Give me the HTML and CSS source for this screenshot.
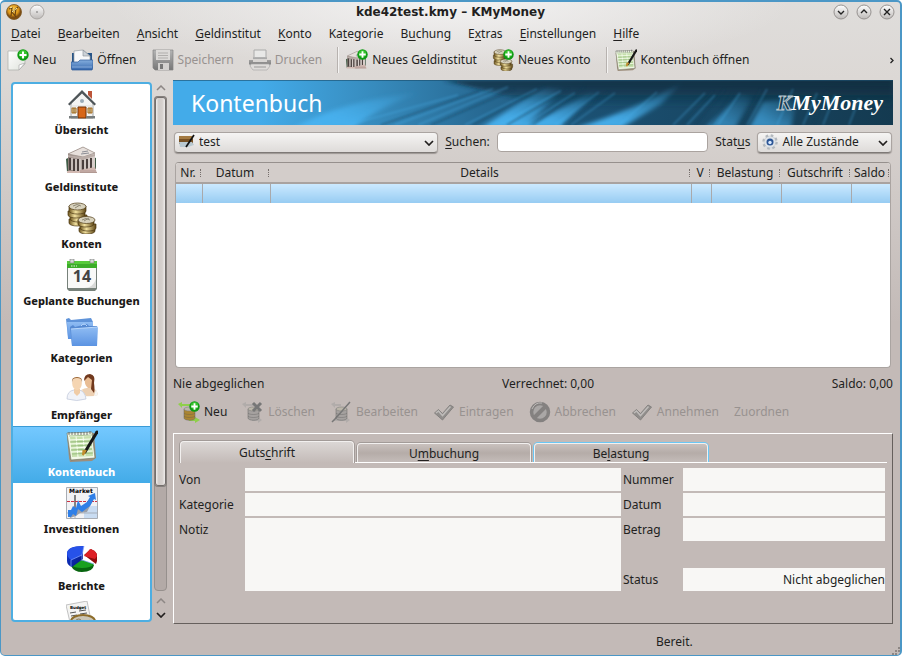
FILE: index.html
```html
<!DOCTYPE html>
<html lang="de">
<head>
<meta charset="utf-8">
<title>kde42test.kmy – KMyMoney</title>
<link rel="stylesheet" href="styles.css">
</head>
<body>
<svg class="sprite" aria-hidden="true">
  <defs>
    <linearGradient id="gold" x1="0" x2="1"><stop offset="0" stop-color="#6b531c"/><stop offset=".4" stop-color="#f3e2a0"/><stop offset="1" stop-color="#5c4414"/></linearGradient>
    <linearGradient id="paper" x1="0" y1="0" x2="1" y2="1"><stop offset="0" stop-color="#fff"/><stop offset="1" stop-color="#dfe3dc"/></linearGradient>
    <linearGradient id="folder" x1="0" y1="0" x2="0" y2="1"><stop offset="0" stop-color="#8fbcf3"/><stop offset="1" stop-color="#5b93e2"/></linearGradient>
    <linearGradient id="tray" x1="0" y1="0" x2="0" y2="1"><stop offset="0" stop-color="#84aede"/><stop offset="1" stop-color="#3567ac"/></linearGradient>
    <linearGradient id="steel" x1="0" y1="0" x2="0" y2="1"><stop offset="0" stop-color="#b5b5b5"/><stop offset="1" stop-color="#777"/></linearGradient>
    <linearGradient id="roundbtn" x1="0" y1="0" x2="0" y2="1"><stop offset="0" stop-color="#fff"/><stop offset="1" stop-color="#bdbab8"/></linearGradient>
    <radialGradient id="orb" cx=".45" cy=".35"><stop offset="0" stop-color="#ffd860"/><stop offset=".7" stop-color="#dc9518"/><stop offset="1" stop-color="#7d4d12"/></radialGradient>
    <linearGradient id="stone" x1="0" x2="1"><stop offset="0" stop-color="#897b74"/><stop offset="1" stop-color="#d9d0cc"/></linearGradient>
    <linearGradient id="bluepie" x1="0" y1="0" x2="1" y2="1"><stop offset="0" stop-color="#123bd8"/><stop offset="1" stop-color="#04167d"/></linearGradient>
  </defs>
  <symbol id="plus" viewBox="0 0 12 12"><circle cx="6" cy="6" r="5.700" fill="#0f9a14"/><circle cx="6" cy="5" r="4" fill="#35c22c"/><path d="M6 2.500v7M2.500 6h7" stroke="#fff" stroke-width="2"/></symbol>
  <symbol id="coins" viewBox="0 0 32 32">
    <g stroke="#4d3a14" stroke-width=".7">
      <g fill="url(#gold)">
        <path d="M3 17v4c0 4 17 4 17 0v-4z"/><path d="M4 13v4c0 4 17 4 17 0v-4z"/><path d="M2 9v4c0 4 17 4 17 0V9z"/><path d="M3 4v5c0 4 17 4 17 0V4z"/>
      </g>
      <ellipse cx="11.500" cy="4.500" rx="8.500" ry="3.500" fill="#d8d2bd"/>
      <g fill="url(#gold)">
        <path d="M13 26v3c0 4 16 4 16 0v-3z"/><path d="M14 22v4c0 4 16 4 16 0v-4z"/><path d="M12 18v4c0 4 16 4 16 0v-4z"/>
      </g>
      <ellipse cx="20.500" cy="18" rx="8.500" ry="3.500" fill="#d8d2bd"/>
    </g>
    <path d="M7 4q4-3 8 0M9 6l5-3M16 18q4-3 8 0M18 19l5-3" stroke="#8e8875" fill="none"/>
  </symbol>
  <symbol id="bank" viewBox="0 0 32 32">
    <path d="M0 14l4-2v15H1zM27 12l3 1v11h-3z" fill="#3f5b46"/>
    <path d="M2 9l15-7 12 6v17l-12 3-15-2z" fill="url(#stone)"/>
    <path d="M2 9L17 2l12 6-12 4z" fill="#e7e0dc" stroke="#9f938d" stroke-width=".8"/>
    <path d="M2 10l13 2v2L2 12zM15 12l14-3v2l-14 4z" fill="#b9aca7"/>
    <path d="M4 13v12M8 14v12M12 14v12M17 15v12M21 14v11M25 13v11" stroke="#4a403e" stroke-width="2"/>
    <path d="M6 13v12M10 14v12M14 14v12M19 14v12M23 13v12M27 12v12" stroke="#d9d0cc" stroke-width="1.500"/>
    <path d="M14 25l15-3 2 6H14zM1 26h14v2H1z" fill="#d2b9b2"/><path d="M14 26h16M14 27.500h17" stroke="#a38b85" stroke-width=".7"/>
    <path d="M16 7l6-1M15 9l8-1" stroke="#8b8d95"/>
  </symbol>
  <symbol id="ledger" viewBox="0 0 32 32">
    <path d="M3 28l-2-22 2-2 25-1 2 25-4 3-22 1z" fill="#9d8e7c"/>
    <path d="M1 3l25-1 3 26-24 2z" fill="#f3f8e8" stroke="#68705d" stroke-width=".6"/>
    <path d="M4 7l21-1 2 20-21 1z" fill="#c6e0ac"/>
    <path d="M4 10l21-1M4 14l22-1M5 18l21-1M5 22l21-1M10 6l2 21M17 6l2 20" stroke="#f9fff2"/>
    <path d="M3 6l23-1M4 12l22-1M5 16l21-1M5 20l21-1M6 24l21-1" stroke="#7ba661" stroke-width=".6"/>
    <path d="M31 2L19 22" stroke="#171717" stroke-width="3" stroke-linecap="round"/><path d="M20 20l-3 5 .5-5" fill="#c18d2e" stroke="#c18d2e" stroke-width="2"/>
    <path d="M3 2v3M6 2v3M9 2v3M12 2v3M15 2v3M18 2v3M21 2v3M24 1v3" stroke="#555" stroke-width=".8"/>
  </symbol>
  <symbol id="check" viewBox="0 0 22 22"><path d="M1.500 12l4-3.500 4 4L17 4l3.500 2L9.500 19z" fill="#918e8c" stroke="#858280"/><path d="M3 12l2.500-2 4 4.500 8-9" stroke="#bfbcba" stroke-width="1.500" fill="none"/></symbol>
  <symbol id="txn" viewBox="0 0 22 22"><path d="M6 8v9c0 3 11 3 11 0V8z" fill="currentColor" stroke="#666" stroke-width=".5"/><ellipse cx="11.500" cy="8" rx="5.500" ry="2" fill="#bbb6a9" stroke="#777" stroke-width=".5"/><path d="M6 12c1 2 10 2 11 0M6 15c1 2 10 2 11 0" fill="none" stroke="#5555"/></symbol>
  <symbol id="down" viewBox="0 0 10 6"><path d="M1 1l4 4 4-4" fill="none" stroke="currentColor" stroke-width="1.700"/></symbol>
  <symbol id="up" viewBox="0 0 10 6"><path d="M1 5l4-4 4 4" fill="none" stroke="currentColor" stroke-width="1.500"/></symbol>
</svg>

<div class="window">
  <header class="titlebar">
    <div class="title-buttons">
      <svg width="16" height="16" viewBox="0 0 16 16"><circle cx="8" cy="8" r="7.500" fill="url(#orb)" stroke="#7b5520" stroke-width=".8"/><path d="M3 5l3-1-1 8M12 3L6 8l4 5M10 4l-1 8" stroke="#6a4310" stroke-width="1.200" fill="none"/><path d="M4 4l2-1M6 8l5-4" stroke="#fff0a8" fill="none"/></svg>
      <button class="round" aria-label="Fenstermenü"><svg width="16" height="16" viewBox="0 0 16 16"><circle cx="8" cy="8" r="7" fill="url(#roundbtn)" stroke="#aaa6a3"/><circle cx="8" cy="8" r=".8" fill="#666"/></svg></button>
    </div>
    <h1>kde42test.kmy – KMyMoney</h1>
    <div class="title-buttons end">
      <button class="round" aria-label="Minimieren"><svg width="16" height="16" viewBox="0 0 16 16"><circle cx="8" cy="8" r="7" fill="url(#roundbtn)" stroke="#969290"/><path d="M5 7l3 3 3-3" fill="none" stroke="#222" stroke-width="1.400"/></svg></button>
      <button class="round" aria-label="Maximieren"><svg width="16" height="16" viewBox="0 0 16 16"><circle cx="8" cy="8" r="7" fill="url(#roundbtn)" stroke="#969290"/><path d="M5 9l3-3 3 3" fill="none" stroke="#222" stroke-width="1.400"/></svg></button>
      <button class="round" aria-label="Schließen"><svg width="16" height="16" viewBox="0 0 16 16"><circle cx="8" cy="8" r="7" fill="url(#roundbtn)" stroke="#969290"/><path d="M5 5l6 6M11 5l-6 6" fill="none" stroke="#222" stroke-width="1.400"/></svg></button>
    </div>
  </header>

  <nav class="menubar">
    <button><u>D</u>atei</button><button><u>B</u>earbeiten</button><button><u>A</u>nsicht</button><button><u>G</u>eldinstitut</button><button><u>K</u>onto</button><button>Ka<u>t</u>egorie</button><button>B<u>u</u>chung</button><button>E<u>x</u>tras</button><button><u>E</u>instellungen</button><button><u>H</u>ilfe</button>
  </nav>

  <div class="toolbar">
    <button class="tool"><svg width="22" height="22" viewBox="0 0 22 22"><path d="M1 2h17v13l-6 6H1z" fill="url(#paper)" stroke="#b1b4ae" stroke-width=".8"/><path d="M18 14l-6 7v-5z" fill="#fff" stroke="#aaa" stroke-width=".7"/><use href="#plus" x="10" y="0" width="12" height="12"/></svg>Neu</button>
    <button class="tool"><svg width="22" height="22" viewBox="0 0 22 22"><path d="M1 4h20v12H1z" fill="#275487"/><path d="M3 14V2l9-1 7 6v8z" fill="#f7f8fa" stroke="#98a0a8" stroke-width=".7"/><path d="M12 1v6h7z" fill="#ccd2d8" stroke="#858c94" stroke-width=".6"/><path d="M0 13h7l2-2h13v8l-1 2H1l-1-2z" fill="url(#tray)" stroke="#2c5a9a" stroke-width=".7"/><path d="M1 18h20" stroke="#a0c2ea" stroke-width=".7"/></svg>Öffnen</button>
    <button class="tool" disabled><svg width="22" height="22" viewBox="0 0 22 22"><path d="M1 1h20v20H3l-2-2z" fill="url(#steel)" stroke="#858585" stroke-width=".7"/><path d="M4 1h14v10H4z" fill="#dcdad8"/><path d="M6 4h10M6 6.500h10M6 9h10" stroke="#b0aeac"/><path d="M6 14h11v7H6z" fill="#d3d1cf"/><path d="M8 15h3v5H8z" fill="#777"/></svg>Speichern</button>
    <button class="tool" disabled><svg width="22" height="22" viewBox="0 0 22 22"><path d="M5 1h12v9H5z" fill="#e8e8e7" stroke="#aaa"/><path d="M0 11h4V8h14v3h4v4l-2 2H2l-2-2z" fill="url(#steel)"/><path d="M4 10h14v3H4z" fill="#d7d5d3"/><path d="M2 15h18l1 2-3 4H4l-3-4z" fill="#dedcda" stroke="#aaa" stroke-width=".7"/><path d="M5 18h12" stroke="#999"/></svg>Drucken</button>
    <span class="separator"></span>
    <button class="tool"><svg width="22" height="22" viewBox="0 0 22 22"><use href="#bank" x="0" y="1" width="21" height="21"/><use href="#plus" x="11" y="0" width="11" height="11"/></svg>Neues Geldinstitut</button>
    <button class="tool"><svg width="22" height="22" viewBox="0 0 22 22"><use href="#coins" width="22" height="22"/><use href="#plus" x="11" y="0" width="11" height="11"/></svg>Neues Konto</button>
    <span class="separator"></span>
    <button class="tool"><svg width="22" height="22"><use href="#ledger"/></svg>Kontenbuch öffnen</button>
    <button class="overflow" aria-label="Weitere"><svg width="4" height="7" viewBox="0 0 4 7"><path d="M.500 1L3 3.500.500 6" fill="none" stroke="#222" stroke-width="1.300"/></svg></button>
  </div>

  <div class="body">
    <aside class="sidebar">
      <nav class="views">
        <a href="#"><svg viewBox="0 0 32 32"><path d="M5 14L16 4l11 10v16H5z" fill="#f4f4f3" stroke="#8b8d8d" stroke-width=".8"/><path d="M5 18h22M5 21h22M5 24h22" stroke="#dedfdf"/><path d="M22 3h4v8l-4-4z" fill="#bc5539"/><path d="M16 2L2 16l1.500 1.500L16 5.500l12.500 12L30 16z" fill="#4e5558"/><path d="M12 19h8v11h-8z" fill="#d76619" stroke="#733207"/><path d="M6 20h4v5H6zM22 20h4v5h-4z" fill="#e0d09e" stroke="#a36a1c"/><path d="M8 20v5M24 20v5" stroke="#8b5d24"/><path d="M3 28h9v2.500H3zM20 28h9v2.500h-9z" fill="#777c7d"/><circle cx="16" cy="13" r="2" fill="#9aabb7"/></svg>Übersicht</a>
        <a href="#"><svg><use href="#bank"/></svg>Geldinstitute</a>
        <a href="#"><svg><use href="#coins"/></svg>Konten</a>
        <a href="#"><svg viewBox="0 0 32 32"><path d="M1 4h30v26l-2 2H3l-2-2z" fill="#77817a"/><path d="M2 7h28v22H2z" fill="#f9f9f8"/><path d="M1 2h30v7H1z" fill="#3cad29"/><path d="M1 2h30v3H1z" fill="#57cb3b"/><path d="M4 0h4v4H4zM24 0h4v4h-4z" fill="#d5d9d6" stroke="#777" stroke-width=".6"/><path d="M18 29q9 0 12-9v9z" fill="#d9dad8"/><text x="16" y="23" class="cal-day">14</text><path d="M5 7h6" stroke="#e5f7de" stroke-dasharray="1.500 1"/></svg>Geplante Buchungen</a>
        <a href="#"><svg viewBox="0 0 32 32"><path d="M0 3l3-1 2 2 20-2 2 4v15H2z" fill="#5f93d9"/><path d="M1 6h26v17H2z" fill="url(#folder)"/><path d="M4 11l3-2 2 2 12-3 2 2h8v20H6z" fill="#5589d2"/><path d="M5 13l27-2-1 19H6z" fill="url(#folder)"/><path d="M15 10q3-4 6 0M5 13l27-2" fill="none" stroke="#b9d7fb"/></svg>Kategorien</a>
        <a href="#"><svg viewBox="0 0 32 32"><path d="M14 21q1-6 7-6h5q5 1 6 7-7 2-15 1z" fill="#edd0b2"/><path d="M16 17l4 6h8l2-7 2 6q-7 3-16 1z" fill="#f6f6f4"/><path d="M19 6q1-4 5-4t4 5l-1 8h-5q-4-3-3-9" fill="#e9bd94"/><path d="M18 8q0-7 6-7 6 1 4 9 1 7 0 10l-3-4 1-9-4-3z" fill="#71391e"/><path d="M1 26q0-8 7-9h5q6 1 7 9-9 3-19 0z" fill="#f1f3f9" stroke="#bcc4d8" stroke-width=".7"/><path d="M8 16h6v4l-3 3-3-3z" fill="#f0cca7"/><ellipse cx="11" cy="10.500" rx="4.800" ry="6.500" fill="#f5d5b2"/><path d="M6 10q0-5 5-5t5 5q1-6-5-6T6 10" fill="#9a6434"/></svg>Empfänger</a>
        <a href="#" class="current" aria-current="page"><svg><use href="#ledger"/></svg>Kontenbuch</a>
        <a href="#"><svg viewBox="0 0 32 32"><path d="M.500.500h31v31H.500z" fill="#f1f2f5" stroke="#a9adb4"/><path d="M18 19h13v12H18z" fill="#c9dcf2"/><path d="M9 8v23M1 26h30" stroke="#969ba5" stroke-width=".7"/><path d="M9 8v14" stroke="#333"/><path d="M1 14.500h30" stroke="#cf3142" stroke-dasharray="3 1"/><path d="M4 31l-1-5 7-5 3 1 7-5 6-8v6l-5 10-7 1-4 3z" fill="#9b9fa8"/><path d="M2 30v-7h3l2-4 3 2 2-8 3 6 6-4 3-5-2-1 7-3 1 7-2-1-4 7-8 6-4-3-2 7-3-2-2 3z" fill="#2f7fe7"/><text x="3" y="6" class="chart-name">Market</text></svg>Investitionen</a>
        <a href="#"><svg viewBox="0 0 32 32"><path d="M18 11l7-6q6 3 6 6v6l-1 3z" fill="#8f0b0e"/><path d="M18 12l6-7q7 2 7 7l-2 3z" fill="#dd2026"/><path d="M5 22l11-6 12 5q-1 7-12 7Q8 28 5 22z" fill="#08650f"/><path d="M5 21l11-5 12 4q-3 4-12 4-8 0-11-3z" fill="#19a01f"/><path d="M1 9v8q0 4 5 6l11-8V2Q2 2 1 9z" fill="url(#bluepie)"/><path d="M1 9Q2 2 18 2l-2 9-11 5Q1 13 1 9z" fill="#2752e9"/><path d="M5 16v7M16 11v6M5 16l11-5 2-9M16 16l12 4" stroke="#88a6ff" stroke-width=".7" fill="none"/></svg>Berichte</a>
        <a href="#" aria-label="Budgets"><svg viewBox="0 0 32 32"><path d="M0 4l21-4 5 24-20 6z" fill="#f4f4f3" stroke="#aaa" stroke-width=".7"/><text x="4" y="8" class="budget-name">Budget</text><path d="M4 12l6-1M13 10l7-1M5 15l6-1M14 13l7-1" stroke="#555"/><ellipse cx="17" cy="20" rx="12" ry="6" fill="#cbc6b7" stroke="#8d6c2a" stroke-width="2"/><path d="M9 20q4-4 7 0t8-1" stroke="#887b5c" fill="none"/></svg></a>
      </nav>
      <div class="scrollbar" aria-hidden="true">
        <svg class="arrow faint" width="10" height="6"><use href="#up"/></svg>
        <div class="groove"><div class="thumb"></div></div>
        <svg class="arrow faint" width="10" height="6"><use href="#up"/></svg>
        <svg class="arrow" width="10" height="6"><use href="#down"/></svg>
      </div>
    </aside>

    <main class="content">
      <div class="banner">
        <svg class="banner-art" viewBox="0 0 720 45" preserveAspectRatio="none" aria-hidden="true">
          <defs>
            <linearGradient id="sky" x1="0" x2="1"><stop offset="0" stop-color="#43abe9"/><stop offset=".12" stop-color="#43abe9"/><stop offset=".28" stop-color="#378bbd"/><stop offset=".42" stop-color="#286b95"/><stop offset=".58" stop-color="#1b5072"/><stop offset="1" stop-color="#143a50"/></linearGradient>
            <linearGradient id="shade" x1="0" y1="0" x2="0" y2="1"><stop offset="0" stop-color="#102c3d" stop-opacity=".9"/><stop offset="1" stop-color="#102c3d" stop-opacity="0"/></linearGradient>
            <linearGradient id="ray" x1="0" y1="1" x2="1" y2="0"><stop offset="0" stop-color="#48b2f0"/><stop offset=".3" stop-color="#48b2f0" stop-opacity=".9"/><stop offset="1" stop-color="#48b2f0" stop-opacity="0"/></linearGradient>
            <filter id="soft"><feGaussianBlur stdDeviation="2"/></filter>
            <filter id="thin"><feGaussianBlur stdDeviation="1"/></filter>
          </defs>
          <path d="M0 0h720v45H0z" fill="url(#sky)"/>
          <path d="M270 0h450v28H380z" fill="url(#shade)" filter="url(#soft)"/>
          <g fill="url(#ray)" filter="url(#soft)">
            <path d="M120 48q50-28 130-36-40 12-70 36z"/><path d="M308 48l62-40 20 0-38 40z"/><path d="M350 48l75-38-38 38z"/><path d="M402 48q60-18 108-46l-22 22-40 24z"/><path d="M532 48l36-34 12 2-18 32z" opacity=".6"/><path d="M576 48l14-26 34-4-6 30z" opacity=".7"/>
          </g>
          <g stroke="#4db7f3" stroke-width="1.500" filter="url(#thin)" opacity=".35" fill="none">
            <path d="M175 45l110-30M222 45l98-36M245 45l90-38M292 45l72-36M326 45l62-34M352 45l50-32M382 45l44-33M398 45l44-32M446 45l38-33M500 45l32-32M514 45l28-30M545 45l22-32M574 45l20-36M604 45l16-36M630 45l14-32M650 45l12-30M676 45l10-26"/>
          </g>
          <g stroke="#123b54" stroke-width="1.500" filter="url(#thin)" opacity=".45" fill="none"><path d="M208 45l98-34M258 45l84-36M300 45l72-38M334 45l62-36M360 45l52-38M390 45l46-34M508 45l32-34M522 45l30-36M538 45l22-32M568 45l20-36M640 45l14-34"/></g>
          <path d="M0 .5h720" stroke="#1a4e6d" opacity=".6"/>
        </svg>
        <h2>Kontenbuch</h2>
        <div class="logo"><span class="logo-k">K</span>MyMoney</div>
      </div>

      <form class="filters">
        <div class="combo account">
          <svg class="combo-icon" width="16" height="16" viewBox="0 0 16 16"><path d="M0 2h14v8H0z" fill="#765023"/><path d="M0 2h14v3H0z" fill="#a37a42"/><path d="M0 8h13l2 3-6 2H1z" fill="#b9c9d1"/><path d="M15 1L7 13" stroke="#111" stroke-width="1.700"/></svg>
          <select aria-label="Konto"><option>test</option></select>
          <svg class="combo-arrow" width="10" height="6"><use href="#down"/></svg>
        </div>
        <label for="search"><u>S</u>uchen:</label>
        <input id="search" class="search" type="text">
        <label for="state">Stat<u>u</u>s</label>
        <div class="combo state">
          <svg class="combo-icon" width="16" height="16" viewBox="0 0 16 16"><circle cx="8" cy="8" r="6.500" fill="#d2d6da" stroke="#b3b8bd" stroke-width="2.500" stroke-dasharray="2.500 2.600"/><circle cx="8" cy="8" r="5.500" fill="#dfe3e7"/><circle cx="8" cy="8" r="3.500" fill="#2c5595"/><circle cx="8" cy="8.500" r="1.700" fill="#d7e8ff"/></svg>
          <select id="state"><option>Alle Zustände</option></select>
          <svg class="combo-arrow" width="10" height="6"><use href="#down"/></svg>
        </div>
      </form>

      <div class="register">
        <table>
          <colgroup><col class="c-nr"><col class="c-date"><col><col class="c-v"><col class="c-amount"><col class="c-amount"><col class="c-balance"></colgroup>
          <thead><tr><th>Nr.</th><th>Datum</th><th>Details</th><th>V</th><th>Belastung</th><th>Gutschrift</th><th>Saldo</th></tr></thead>
          <tbody><tr><td></td><td></td><td></td><td></td><td></td><td></td><td></td></tr></tbody>
        </table>
      </div>

      <div class="summary"><span>Nie abgeglichen</span><span>Verrechnet: 0,00</span><span>Saldo: 0,00</span></div>

      <div class="actions">
        <button class="tool"><svg class="brass" width="22" height="22" viewBox="0 0 22 22"><path d="M0 3l4-2v2h8v2H4v2zM22 19l-5-3v2h-6v2h6v2z" fill="#8fcf4b"/><use href="#txn"/><use href="#plus" x="11" y="0" width="11" height="11"/></svg>Neu</button>
        <button class="tool" disabled><svg class="ash" width="22" height="22" viewBox="0 0 22 22"><path d="M0 3l4-2v2h8v2H4v2zM20 19l-4-3v2h-6v2h6v2z" fill="#b1acaa"/><use href="#txn"/><path d="M11 2l8 8M19 2l-8 8" stroke="#777" stroke-width="3"/></svg>Löschen</button>
        <button class="tool" disabled><svg class="ash" width="22" height="22" viewBox="0 0 22 22"><path d="M1 3l4-2v2h6v2H5v2zM20 19l-4-3v2H4v2h12v2z" fill="#b1acaa"/><use href="#txn"/><path d="M20 1L5 18l-3 3" stroke="#777" stroke-width="1.500"/></svg>Bearbeiten</button>
        <button class="tool" disabled><svg width="22" height="22"><use href="#check"/></svg>Eintragen</button>
        <button class="tool" disabled><svg width="22" height="22" viewBox="0 0 22 22"><circle cx="11" cy="11" r="8.500" fill="#aaa7a6" stroke="#848180" stroke-width="3.500"/><path d="M5 17L17 5" stroke="#848180" stroke-width="4"/><path d="M3 8q3-7 10-6" stroke="#bcb9b7" fill="none"/></svg>Abbrechen</button>
        <button class="tool" disabled><svg width="22" height="22"><use href="#check"/></svg>Annehmen</button>
        <button class="tool" disabled>Zuordnen</button>
      </div>

      <section class="editor">
        <div class="tabs" role="tablist">
          <button role="tab" class="tab active" aria-selected="true">Guts<u>c</u>hrift</button>
          <button role="tab" class="tab" aria-selected="false">U<u>m</u>buchung</button>
          <button role="tab" class="tab hover" aria-selected="false">Be<u>l</u>astung</button>
        </div>
        <form class="fields">
          <label for="f-from">Von</label><input id="f-from" type="text">
          <label for="f-number">Nummer</label><input id="f-number" type="text">
          <label for="f-category">Kategorie</label><input id="f-category" type="text">
          <label for="f-date">Datum</label><input id="f-date" type="text">
          <label for="f-memo">Notiz</label><textarea id="f-memo" class="memo"></textarea>
          <label for="f-amount">Betrag</label><input id="f-amount" type="text">
          <label for="f-status" class="status-label">Status</label><input id="f-status" class="status-field" type="text" value="Nicht abgeglichen">
        </form>
      </section>
    </main>
  </div>

  <footer class="statusbar">
    <span>Bereit.</span>
    <svg class="grip" width="8" height="8" viewBox="0 0 8 8" aria-hidden="true"><path d="M0 6h2v2H0zM3 6h2v2H3zM3 3h2v2H3zM6 0h2v2H6zM6 3h2v2H6z" fill="#8d8683"/></svg>
  </footer>
</div>
</body>
</html>
```
FILE: styles.css
```css
* { box-sizing: border-box; }

body {
  margin: 0;
  background: #fff;
  color: #221f1e;
  font: 12px/16px "Noto Sans", sans-serif;
}

button, input, select, textarea { font: inherit; color: inherit; }
button { border: 0; padding: 0; background: none; white-space: nowrap; }
u { text-underline-offset: 2px; }
.sprite { position: absolute; width: 0; height: 0; }

.window {
  height: 100vh;
  display: flex;
  flex-direction: column;
  border: 1px solid #4b97c6;
  border-top-width: 2px;
  border-right-width: 2px;
  border-radius: 5px;
  background:
    radial-gradient(ellipse 340px 70px at 50% 0, #f3f2f2, rgba(243, 242, 242, 0)),
    linear-gradient(#dfdddb 0, #dcd8d5 76px, #d0cac7 190px, #c3bab7 320px);
}

.titlebar {
  display: grid;
  grid-template-columns: 1fr auto 1fr;
  align-items: center;
  height: 20px;
  padding: 0 5px;
}
.titlebar h1 { margin: 0; font: bold 12px/20px "DejaVu Sans", sans-serif; }
.title-buttons { display: flex; gap: 7px; }
.title-buttons.end { justify-content: flex-end; }
.title-buttons svg { display: block; }

.menubar { display: flex; gap: 17px; height: 24px; padding: 0 10px; align-items: center; }

.toolbar { display: flex; align-items: center; height: 28px; padding: 0 6px; gap: 15px; }
.tool { display: flex; align-items: center; gap: 4px; }
.tool svg { flex: none; }
.tool:disabled { color: #989290; }
.separator { width: 2px; height: 26px; margin-right: -8px; background: #b7b2af; border-right: 1px solid #f4f3f2; }
.overflow { margin-left: auto; }

.body { flex: 1; min-height: 0; display: flex; gap: 5px; padding: 6px 7px 0 10px; }

.sidebar { flex: none; display: flex; gap: 1px; width: 157px; padding: 2px 0 2px; }
.views {
  flex: 1;
  overflow: hidden;
  border: 2px solid #4daee2;
  border-radius: 4px;
  background: #fff;
}
.views a {
  display: flex;
  flex-direction: column;
  align-items: center;
  gap: 2px;
  height: 57px;
  padding-top: 4px;
  color: #1c1a19;
  font-size: 11px;
  font-weight: 800;
  text-decoration: none;
  white-space: nowrap;
}
.views svg { flex: none; width: 32px; height: 32px; }
.views .current { color: #fff; background: linear-gradient(#74c8ff, #43abe8); border-top: 1px solid #3a9bd6; padding-top: 3px; }
.cal-day { font: bold 16px "Noto Sans", sans-serif; text-anchor: middle; fill: #444; }
.chart-name { font: bold 6px "DejaVu Sans", sans-serif; }
.budget-name { font: bold 4px "DejaVu Sans", sans-serif; }

.scrollbar { width: 15px; display: flex; flex-direction: column; align-items: center; gap: 8px; padding: 3px 0 4px; }
.arrow { flex: none; }
.faint { color: #8d8785; }
.groove { flex: 1; width: 13px; margin: -3px 0 -1px; border: 1px solid #96908d; border-radius: 4px; background: #b3aaa7; }
.thumb { height: 79%; border: 1px solid #736e6c; border-radius: 3px; background: linear-gradient(90deg, #f0eeed, #d0cbc8 30%, #d6d1ce 70%, #eeeceb); box-shadow: 0 0 0 1px #85807d; }

.content { flex: 1; min-width: 0; display: flex; flex-direction: column; }

.banner { position: relative; display: flex; align-items: center; justify-content: space-between; height: 45px; padding: 0 10px 0 18px; color: #fff; }
.banner-art { position: absolute; inset: 0; width: 100%; height: 100%; }
.banner h2 { position: relative; margin: 0; font-size: 23px; line-height: 44px; font-weight: 400; }
.logo { position: relative; font: italic bold 22px/40px "Liberation Serif", serif; }
.logo-k { color: #16384c; -webkit-text-stroke: 1px #b8c6ce; }

.filters { display: flex; align-items: center; gap: 7px; height: 34px; padding: 0 1px; margin-bottom: 3px; }
.combo { position: relative; }
.combo.account { flex: 265; }
.combo.state { flex: 135; }
.combo select {
  appearance: none;
  display: block;
  width: 100%;
  height: 21px;
  padding: 0 20px 0 24px;
  border: 1px solid #aaa4a1;
  border-bottom-color: #7e7976;
  border-radius: 4px;
  background: linear-gradient(#f5f4f3, #dedbd9);
  box-shadow: 0 1px 1px #9c9693;
}
.combo-icon { position: absolute; left: 5px; top: 2px; pointer-events: none; }
.combo-arrow { position: absolute; right: 4px; top: 8px; pointer-events: none; }
.search { flex: 206; min-width: 0; height: 20px; border: 1px solid #aaa39f; border-radius: 4px; background: #fff; }

.register { flex: 1; min-height: 80px; margin: 0 2px; border: 1px solid #aaa4a1; border-top: 1px solid #96908d; border-radius: 4px; background: #fff; overflow: hidden; }
.register table { width: 100%; border-collapse: collapse; table-layout: fixed; }
.c-nr { width: 26px; }
.c-date { width: 68px; }
.c-v { width: 20px; }
.c-amount { width: 70px; }
.c-balance { width: 39px; }
.register th {
  position: relative;
  height: 20px;
  padding: 0 4px 0 2px;
  font-weight: 400;
  background: #d3cdca;
  border-bottom: 2px solid #a9a3a0;
  white-space: nowrap;
}
.register th::after { content: ""; position: absolute; right: 1px; top: 6px; height: 8px; border-right: 1px dotted #766f6c; }
.register td { height: 20px; padding: 0; background: linear-gradient(#cbe9ff, #97ccf2); border-right: 1px solid #a9a9ab; }
.register td:last-child { border-right: 0; }

.summary { display: flex; justify-content: space-between; height: 32px; align-items: center; margin-bottom: 1px; }

.actions { display: flex; align-items: center; gap: 15px; height: 22px; padding-left: 5px; margin-bottom: 10px; }
.brass { color: #ab8532; }
.ash { color: #a5a19f; }

.editor { height: 191px; padding: 7px 5px; border: 1px solid #fff; border-right-color: #66605d; border-bottom-color: #66605d; }
.tabs { display: flex; align-items: flex-end; gap: 3px; height: 22px; padding-left: 1px; border-bottom: 1px solid #fff; }
.tab { width: 174px; height: 19px; border: 1px solid #f2f0ef; border-bottom: 0; border-radius: 4px 4px 0 0; background: linear-gradient(#c9c1be, #b5aca8 50%, #c4bcb9); box-shadow: 0 0 0 1px #a29b98; clip-path: inset(-1px -1px 0); line-height: 20px; }
.tab.active { height: 22px; margin-bottom: -1px; background: linear-gradient(#dbd7d5, #c3bab7); }
.tab.hover { box-shadow: 0 0 0 1px #68c7f5; }

.fields {
  display: grid;
  grid-template-columns: 64px minmax(0, 376fr) 58px minmax(0, 202fr);
  grid-template-rows: repeat(5, 23px);
  gap: 2px;
  margin-top: 5px;
  padding-right: 2px;
}
.fields label { line-height: 24px; }
.fields input, .fields textarea { width: 100%; min-width: 0; height: 100%; padding: 0; border: 0; border-radius: 0; background: #f8f7f5; resize: none; }
.memo { grid-row: 3 / 6; grid-column: 2; }
.status-label { grid-row: 5; grid-column: 3; }
.fields .status-field { grid-row: 5; grid-column: 4; text-align: right; }

.statusbar { position: relative; flex: none; height: 31px; padding: 10px 0 0 655px; }
.grip { position: absolute; right: 0; bottom: 0; }
```
